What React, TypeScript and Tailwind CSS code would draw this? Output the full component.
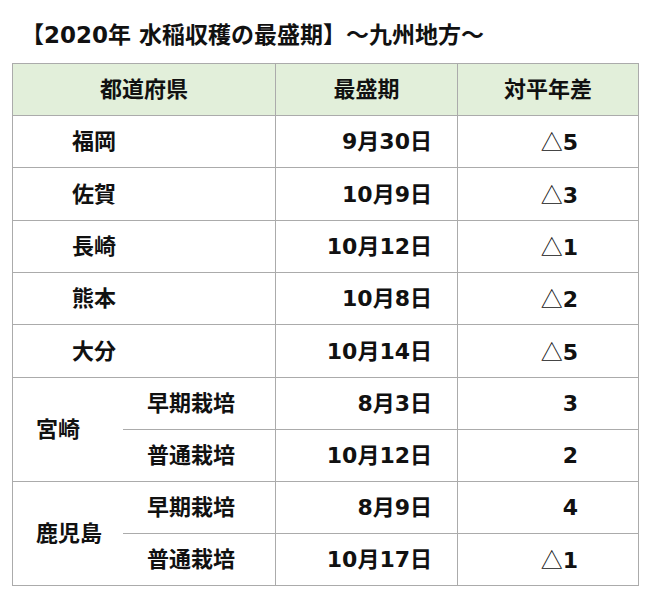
const FONT = "font-['DejaVu_Sans','Noto_Sans_CJK_JP',sans-serif]";

type Row = { pref: string; sub?: string; date: string; diff: string };

const single: Row[] = [
  { pref: '福岡', date: '9月30日', diff: '△5' },
  { pref: '佐賀', date: '10月9日', diff: '△3' },
  { pref: '長崎', date: '10月12日', diff: '△1' },
  { pref: '熊本', date: '10月8日', diff: '△2' },
  { pref: '大分', date: '10月14日', diff: '△5' },
];

const groups: { pref: string; rows: { sub: string; date: string; diff: string }[] }[] = [
  {
    pref: '宮崎',
    rows: [
      { sub: '早期栽培', date: '8月3日', diff: '3' },
      { sub: '普通栽培', date: '10月12日', diff: '2' },
    ],
  },
  {
    pref: '鹿児島',
    rows: [
      { sub: '早期栽培', date: '8月9日', diff: '4' },
      { sub: '普通栽培', date: '10月17日', diff: '△1' },
    ],
  },
];

function Diff({ v }: { v: string }) {
  if (v.startsWith('△')) {
    return (
      <span>
        <span className="font-['Noto_Sans_CJK_JP',sans-serif] font-normal">△</span>
        {v.slice(1)}
      </span>
    );
  }
  return <span>{v}</span>;
}

const cell = 'border-r border-b border-[#ababab] flex items-center';

export default function App() {
  return (
    <div className={`${FONT} font-bold text-[#111] bg-white w-[650px] h-[597px] pl-[12px]`}>
      <div className="pt-[20px] pl-[9px] h-[63px] text-[23px] leading-[30px]">
        【2020年 水稲収穫の最盛期】～九州地方～
      </div>
      <div className="grid w-[627px] grid-cols-[110px_153px_182px_181px] grid-rows-[52px_52px_53px_52px_52px_53px_52px_52px_52px_52px] border-l border-t border-[#ababab] text-[22px]">
        <div className={`${cell} col-span-2 justify-center bg-[#e2efda]`}>都道府県</div>
        <div className={`${cell} justify-center bg-[#e2efda]`}>最盛期</div>
        <div className={`${cell} justify-center bg-[#e2efda]`}>対平年差</div>

        {single.map((r) => (
          <div key={r.pref} className="contents">
            <div className={`${cell} col-span-2 pl-[59px]`}>{r.pref}</div>
            <div className={`${cell} justify-end pr-[25px]`}>{r.date}</div>
            <div className={`${cell} justify-end pr-[60px]`}>
              <Diff v={r.diff} />
            </div>
          </div>
        ))}

        {groups.map((g) => (
          <div key={g.pref} className="contents">
            <div className="row-span-2 border-b border-[#ababab] flex items-center pl-[23px]">{g.pref}</div>
            {g.rows.map((r) => (
              <div key={r.sub} className="contents">
                <div className={`${cell} pl-[24px]`}>{r.sub}</div>
                <div className={`${cell} justify-end pr-[25px]`}>{r.date}</div>
                <div className={`${cell} justify-end pr-[60px]`}>
                  <Diff v={r.diff} />
                </div>
              </div>
            ))}
          </div>
        ))}
      </div>
    </div>
  );
}
